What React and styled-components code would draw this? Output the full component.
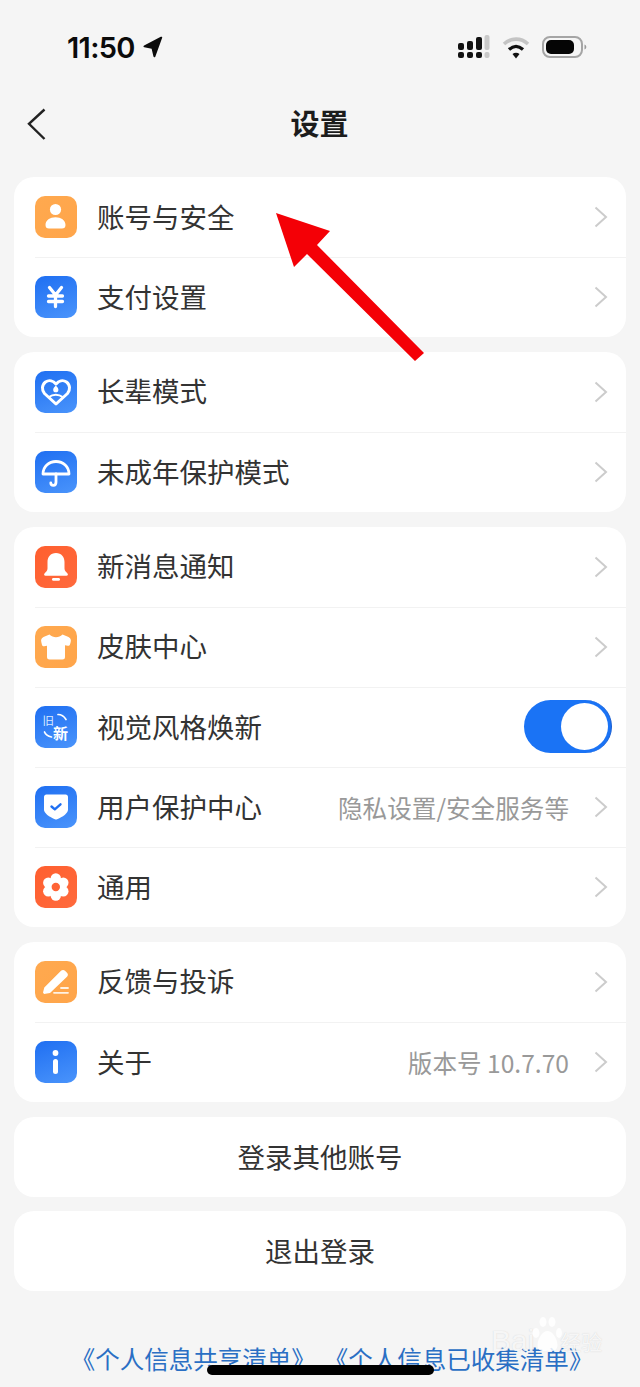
import React from "react";
import styled, { createGlobalStyle } from "styled-components";

const Global = createGlobalStyle`
  html, body { margin: 0; padding: 0; background: #f5f5f5; }
  * { box-sizing: border-box; }
`;

const CJK = `"Noto Sans CJK SC", "Liberation Sans", sans-serif`;

const Page = styled.div`
  position: relative;
  width: 640px;
  height: 1387px;
  overflow: hidden;
  background: #f5f5f5;
  font-family: ${CJK};
  color: #333;
`;
const StatusBar = styled.div`
  height: 94px;
  padding: 0 53px 0 67px;
  display: flex;
  align-items: center;
  justify-content: space-between;
`;
const TimeWrap = styled.div`
  display: flex;
  align-items: center;
  gap: 7px;
`;
const Time = styled.span`
  font-family: Inter, "Liberation Sans", sans-serif;
  font-size: 29px;
  font-weight: 600;
  letter-spacing: -0.7px;
  color: #0b0b0b;
`;
const StatusIcons = styled.div`
  display: flex;
  align-items: center;
  gap: 12px;
`;
const NavBar = styled.div`
  position: relative;
  height: 60px;
  display: flex;
  align-items: center;
  justify-content: center;
  margin-bottom: 23px;
`;
const BackButton = styled.div`
  position: absolute;
  left: 27px;
  top: 14px;
  width: 20px;
  height: 32px;
  display: flex;
`;
const Title = styled.h1`
  margin: 0 1px 4px 0;
  font-size: 29px;
  line-height: 40px;
  font-weight: 700;
  color: #1c1c1c;
`;
const Stack = styled.div`
  padding: 0 14px;
  display: flex;
  flex-direction: column;
  gap: 14.4px;
`;
const Card = styled.section`
  background: #fff;
  border-radius: 20px;
  overflow: hidden;
`;
const Row = styled.div`
  height: 80.2px;
  padding-left: 21px;
  display: flex;
  align-items: center;
  position: relative;
  &:not(:first-child)::before {
    content: "";
    position: absolute;
    left: 21px;
    right: 0;
    top: 0;
    height: 1px;
    background: #f2f2f2;
  }
`;
const Tile = styled.div`
  width: 42px;
  height: 42px;
  border-radius: 10px;
  flex: none;
  background: ${(p) =>
    p.$tone === "orange"
      ? "linear-gradient(135deg,#ffa94f,#ffa54a)"
      : p.$tone === "red"
      ? "linear-gradient(135deg,#ff5f2f,#ff6a3d)"
      : "linear-gradient(160deg,#1f6ff2,#4a94fb)"};
  display: flex;
  svg { display: block; }
`;
const Label = styled.span`
  margin: 0 0 3px 20px;
  font-size: 27.5px;
  line-height: 40px;
  color: #333;
  flex: 1;
`;
const Detail = styled.span`
  font-size: 24.6px;
  line-height: 34px;
  color: #999;
  margin-right: 25px;
`;
const Chevron = styled.svg`
  width: 14px;
  height: 22px;
  margin-right: 18px;
  flex: none;
`;
const Toggle = styled.div`
  width: 88px;
  height: 53px;
  margin-bottom: 1px;
  border-radius: 27px;
  background: #1a73f5;
  margin-right: 14px;
  padding: 3px;
  display: flex;
  justify-content: flex-end;
  border-right: 1px solid #1a5fd0;
`;
const Knob = styled.div`
  width: 47px;
  height: 47px;
  border-radius: 50%;
  background: #fff;
`;
const Action = styled.div`
  height: 80px;
  padding-bottom: 2px;
  background: #fff;
  border-radius: 20px;
  display: flex;
  align-items: center;
  justify-content: center;
  font-size: 27.5px;
  color: #333;
`;
const Links = styled.div`
  margin-top: 51px;
  padding-left: 24px;
  display: flex;
  justify-content: center;
  gap: 8px;
  font-size: 24.5px;
  line-height: 34px;
  color: #2a6fc4;
`;
const HomeBar = styled.div`
  position: absolute;
  left: 207px;
  bottom: 12px;
  width: 227px;
  height: 10px;
  border-radius: 5px;
  background: #000;
`;
const ArrowOverlay = styled.svg`
  position: absolute;
  left: 0;
  top: 0;
  width: 640px;
  height: 400px;
  pointer-events: none;
`;
const Watermark = styled.div`
  position: absolute;
  left: 491px;
  top: 1316px;
  display: flex;
  align-items: flex-end;
  color: rgba(255,255,255,0.82);
  font-family: "Liberation Sans", sans-serif;
  font-size: 30px;
  line-height: 34px;
  text-shadow: 0 0 1px rgba(170,170,170,0.5);
`;
const WatermarkCjk = styled.span`
  font-family: ${CJK};
  font-size: 21px;
  line-height: 30px;
  margin-left: -2px;
  margin-bottom: 2px;
`;
const Paw = styled.svg`
  width: 30px;
  height: 42px;
  margin-left: -2px;
  flex: none;
`;
const OldNew = styled.svg`
  font-family: ${CJK};
`;

const Ic = ({ children }) => (
  <svg width="42" height="42" viewBox="0 0 42 42" fill="none">{children}</svg>
);

const icons = {
  person: (
    <Ic>
      <circle cx="20.500" cy="13.500" r="5.600" fill="#fff" />
      <path d="M10.500 29c0-5 4.500-7.800 10-7.800s10 2.800 10 7.800c0 2.400-1.200 3.600-3.500 3.600H14c-2.300 0-3.500-1.200-3.500-3.600Z" fill="#fff" />
    </Ic>
  ),
  yen: (
    <Ic>
      <path d="M14.500 11.500l6 7.500 6-7.500M13.500 20h14M13.500 25.500h14M20.500 19v11.500" stroke="#fff" strokeWidth="3.300" strokeLinecap="round" strokeLinejoin="round" />
    </Ic>
  ),
  heart: (
    <Ic>
      <path d="M21 33 9.500 22.500C6.500 19 6.800 13.800 10.500 11c3.700-2.400 7.800-1.200 10.500 2 2.700-3.200 6.800-4.400 10.500-2 3.700 2.800 4 8 1 11.500L21 33Z" stroke="#fff" strokeWidth="3" strokeLinejoin="round" />
      <path d="M20.800 14.500c1.700 1.800 2.600 2.900 2.600 4.200a2.600 2.600 0 0 1-5.200 0c0-1.300.9-2.400 2.600-4.200Z" fill="#fff" />
      <path d="M14 26c2-1.600 4.200-2.300 6.800-2.300s4.800.7 6.800 2.300" stroke="#fff" strokeWidth="2" />
    </Ic>
  ),
  umbrella: (
    <Ic>
      <path d="M8 23c0-7.500 5.800-12.500 13-12.500S34 15.500 34 23H8Z" stroke="#fff" strokeWidth="2.800" strokeLinejoin="round" />
      <path d="M21 23v8c0 2.300-1 3.300-2.600 3.300S15.800 33.300 15.800 32" stroke="#fff" strokeWidth="2.800" strokeLinecap="round" />
    </Ic>
  ),
  bell: (
    <Ic>
      <path d="M21 7c-5.500 0-8.500 4-8.500 9v6.500c0 2-1.500 3.500-3 5-.8 1-.3 2.300 1 2.300h21c1.300 0 1.800-1.300 1-2.300-1.500-1.500-3-3-3-5V16c0-5-3-9-8.500-9Z" fill="#fff" />
      <rect x="17" y="32" width="8" height="2.800" rx="1.400" fill="#fff" />
    </Ic>
  ),
  shirt: (
    <Ic>
      <path d="M14.500 8.500c2 2 4 2.700 6.500 2.700s4.500-.7 6.500-2.700l6 2.500c2 .9 2.800 3 2.200 5l-.7 2.500c-.3 1-1.200 1.500-2.200 1.300l-2.800-.5V31c0 1.700-1 2.500-2.500 2.500H14.500C13 33.500 12 32.700 12 31V19.800l-2.800.5c-1 .2-1.900-.3-2.200-1.300L6.300 16c-.6-2 .2-4.100 2.200-5l6-2.500Z" fill="#fff" />
    </Ic>
  ),
  oldnew: (
    <OldNew width="42" height="42" viewBox="0 0 42 42" fill="none">
      <text x="7.500" y="18.500" fontSize="11.500" fill="#dbe9ff">旧</text>
      <text x="18" y="32.500" fontSize="15" fontWeight="700" fill="#fff">新</text>
      <path d="M23 8.500c3.500 0 6 1.700 8 5M9.500 26c1 2.500 3.500 4.300 7 5" stroke="#fff" strokeWidth="1.700" strokeLinecap="round" />
    </OldNew>
  ),
  shield: (
    <Ic>
      <path d="M9 11c0-1.400 1-2.400 2.400-2.400h19.200c1.400 0 2.400 1 2.400 2.400v12.500c0 3.800-5 7.300-11.500 10-.3.100-.7.100-1 0C14 30.800 9 27.300 9 23.500V11Z" fill="#fff" />
      <path d="M16.500 20.500l3.300 2.800 5.700-5" stroke="#1f6ff2" strokeWidth="2.400" strokeLinecap="round" strokeLinejoin="round" />
    </Ic>
  ),
  gear: (
    <Ic>
      <circle cx="20.800" cy="12.500" r="5.200" fill="#fff" />
      <circle cx="20.800" cy="29.500" r="5.200" fill="#fff" />
      <circle cx="13.300" cy="16.700" r="5.200" fill="#fff" />
      <circle cx="28.300" cy="16.700" r="5.200" fill="#fff" />
      <circle cx="13.300" cy="25.300" r="5.200" fill="#fff" />
      <circle cx="28.300" cy="25.300" r="5.200" fill="#fff" />
      <circle cx="20.800" cy="21" r="7.500" fill="#fff" />
      <circle cx="20.800" cy="21" r="4.200" fill="#ff6436" />
    </Ic>
  ),
  pen: (
    <Ic>
      <path d="M8 31.500l1.300-5L26 9.800c1.200-1.200 2.900-1.200 4 0l2 2c1.200 1.200 1.200 2.900 0 4L15 32l-6 .9-1-1.400Z" fill="#fff" />
      <path d="M19 31.800h14M26 27h7" stroke="#fff" strokeWidth="1.800" strokeLinecap="round" opacity=".85" />
    </Ic>
  ),
  info: (
    <Ic>
      <circle cx="20.500" cy="12" r="2.900" fill="#fff" />
      <rect x="18" y="18" width="5" height="15" rx="2.500" fill="#fff" />
    </Ic>
  ),
};

const groups = [
  [
    { icon: "person", tone: "orange", text: "账号与安全" },
    { icon: "yen", tone: "blue", text: "支付设置" },
  ],
  [
    { icon: "heart", tone: "blue", text: "长辈模式" },
    { icon: "umbrella", tone: "blue", text: "未成年保护模式" },
  ],
  [
    { icon: "bell", tone: "red", text: "新消息通知" },
    { icon: "shirt", tone: "orange", text: "皮肤中心" },
    { icon: "oldnew", tone: "blue", text: "视觉风格焕新", toggle: true },
    { icon: "shield", tone: "blue", text: "用户保护中心", detail: "隐私设置/安全服务等" },
    { icon: "gear", tone: "red", text: "通用" },
  ],
  [
    { icon: "pen", tone: "orange", text: "反馈与投诉" },
    { icon: "info", tone: "blue", text: "关于", detail: "版本号 10.7.70" },
  ],
];

export default function App() {
  return (
    <Page>
      <Global />
      <StatusBar>
        <TimeWrap>
          <Time>11:50</Time>
          <svg width="22" height="22" viewBox="0 0 22 24">
            <path d="M21 2 13.500 22.500c-.4 1-1.700 1-2-.1L9.500 14 1.500 12.300c-1.100-.2-1.200-1.600-.2-2L19.500.8c1-.4 1.900.3 1.500 1.200Z" fill="#0b0b0b" />
          </svg>
        </TimeWrap>
        <StatusIcons>
          <svg width="32" height="24" viewBox="0 0 32 24">
            <g fill="#111">
              <rect x="0" y="8" width="6" height="7" rx="2" />
              <rect x="9" y="6" width="6" height="9" rx="2" />
              <rect x="18" y="2" width="6" height="13" rx="2" />
              <rect x="0" y="17" width="6" height="6" rx="2" />
              <rect x="9" y="17" width="6" height="6" rx="2" />
              <rect x="18" y="17" width="6" height="6" rx="2" />
            </g>
            <g fill="#c9c9c9">
              <rect x="26.500" y="0" width="5" height="15" rx="2" />
              <rect x="26.500" y="17" width="5" height="6" rx="2" />
            </g>
          </svg>
          <svg width="28" height="24" viewBox="0 0 28 24" fill="none">
            <path d="M2 9C9 2.500 19 2.500 26 9" stroke="#c4c4c4" strokeWidth="3.600" />
            <path d="M7 14.500c4.500-4 9.500-4 14 0" stroke="#111" strokeWidth="3.300" />
            <path d="M10.500 19c2.200-1.800 4.800-1.800 7 0L14 23.500 10.500 19Z" fill="#111" />
          </svg>
          <svg width="45" height="22" viewBox="0 0 45 22" fill="none">
            <rect x="1" y="1" width="39" height="20" rx="7" stroke="#a5a5a5" strokeWidth="2" />
            <rect x="4" y="4" width="28" height="14" rx="5" fill="#050505" />
            <path d="M42.500 8.500c1.300.4 1.800 1.400 1.800 2.500s-.5 2.100-1.800 2.500v-5Z" fill="#9a9a9a" />
          </svg>
        </StatusIcons>
      </StatusBar>
      <NavBar>
        <BackButton>
          <svg width="20" height="32" viewBox="0 0 20 32" fill="none">
            <path d="M17.500 1.500 2 15.800 17.500 31" stroke="#222" strokeWidth="2.400" />
          </svg>
        </BackButton>
        <Title>设置</Title>
      </NavBar>
      <Stack>
        {groups.map((rows, i) => (
          <Card key={i}>
            {rows.map((r) => (
              <Row key={r.text}>
                <Tile $tone={r.tone}>{icons[r.icon]}</Tile>
                <Label>{r.text}</Label>
                {r.detail && <Detail>{r.detail}</Detail>}
                {r.toggle ? (
                  <Toggle><Knob /></Toggle>
                ) : (
                  <Chevron viewBox="0 0 14 22" fill="none">
                    <path d="M1.500 1.500 12 11 1.500 20.500" stroke="#ccc" strokeWidth="2" />
                  </Chevron>
                )}
              </Row>
            ))}
          </Card>
        ))}
        <Action>登录其他账号</Action>
        <Action>退出登录</Action>
      </Stack>
      <Links>
        <span>《个人信息共享清单》</span>
        <span>《个人信息已收集清单》</span>
      </Links>
      <Watermark>
        <span>Bai</span>
        <Paw viewBox="0 0 30 42" fill="rgba(255,255,255,.85)">
          <ellipse cx="4" cy="17" rx="3.500" ry="5" />
          <ellipse cx="11" cy="6" rx="3.500" ry="5" />
          <ellipse cx="20" cy="6" rx="3.500" ry="5" />
          <ellipse cx="27" cy="17" rx="3" ry="5" />
          <path d="M15.500 15c-5 0-10 8-10 14 0 6 5 7 10 5.500 5 1.500 10 .5 10-5.500 0-6-5-14-10-14Z" />
        </Paw>
        <WatermarkCjk>经验</WatermarkCjk>
      </Watermark>
      <HomeBar />
      <ArrowOverlay viewBox="0 0 640 400">
        <polygon points="276,213 330,231 317,245 424,353 415,361 307,254 294,267" fill="#f40006" />
      </ArrowOverlay>
    </Page>
  );
}
